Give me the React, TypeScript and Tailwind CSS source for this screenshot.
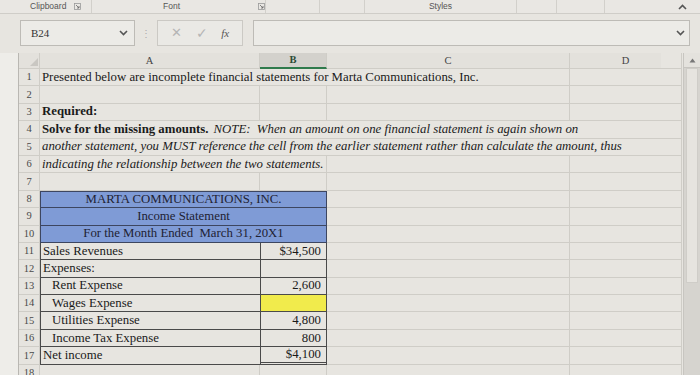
import React from "react";

const serif = "font-['Liberation_Serif','Times_New_Roman',serif]";
const sans = "font-['Liberation_Sans','Arial',sans-serif]";

const grid = "border-r border-b border-[#cfcdc7]";

function Launcher() {
    return (
        <svg width="7" height="7" viewBox="0 0 7 7" className="ml-2">
            <rect x="0.5" y="0.5" width="6" height="6" fill="none" stroke="#9a9a9a" strokeWidth="0.8" />
            <path d="M2 2 L5 5 M5 3 V5 H3" stroke="#666" strokeWidth="0.8" fill="none" />
        </svg>
    );
}

function Chevron({ up = false }: { up?: boolean }) {
    return (
        <svg width="9" height="6" viewBox="0 0 9 6">
            <path d={up ? "M1 5 L4.5 1.5 L8 5" : "M1 1 L4.5 4.5 L8 1"} stroke="#555" strokeWidth="1.6" fill="none" />
        </svg>
    );
}

function RowNum({ n }: { n: number }) {
    return (
        <div className={`w-[21px] shrink-0 flex items-center justify-center text-[10.5px] text-[#4a4a4a] ${grid} bg-[#e6e4df]`}>
            {n}
        </div>
    );
}

function Row({ n, children }: { n: number; children: React.ReactNode }) {
    return (
        <div className="flex h-[17.4px]">
            <RowNum n={n} />
            {children}
        </div>
    );
}

const wA = "w-[220px]";
const wB = "w-[67px]";
const wC = "w-[243px]";
const wD = "w-[112px]";

function Empty({ w }: { w: string }) {
    return <div className={`${w} shrink-0 ${grid}`} />;
}

function TableRow({
    n,
    label,
    value,
    indent = false,
    yellow = false,
    bottom = "",
}: {
    n: number;
    label: string;
    value?: string;
    indent?: boolean;
    yellow?: boolean;
    bottom?: string;
}) {
    return (
        <Row n={n}>
            <div
                className={`${wA} shrink-0 flex items-center border-l border-b-[1.5px] border-[#4a4a4a] ${
                    indent ? "pl-[11px]" : "pl-[2px]"
                } leading-none`}
            >
                {label}
            </div>
            <div
                className={`${wB} shrink-0 flex items-center justify-end pr-[5px] border-l-[1.5px] border-r-[1.5px] border-[#4a4a4a] ${
                    bottom || "border-b-[1.5px]"
                } ${yellow ? "bg-[#f1eb4c]" : ""} leading-none`}
            >
                {value}
            </div>
            <Empty w={wC} />
            <Empty w={wD} />
        </Row>
    );
}

export default function App() {
    return (
        <div className={`w-[700px] h-[375px] overflow-hidden bg-[#e7e5e0] text-[#1a1a1a] ${sans}`}>
            {/* ribbon group labels */}
            <div className="flex h-[14px] border-b border-[#cfcdc8] text-[8.5px] text-[#555] bg-[#e9e7e3]">
                <div className="w-[92px] flex items-center pl-[30px] border-r border-[#d2d0cb]">
                    Clipboard
                    <Launcher />
                </div>
                <div className="w-[174px] flex items-center pl-[71px] border-r border-[#d2d0cb]">
                    Font
                    <span className="ml-[70px]">
                        <Launcher />
                    </span>
                </div>
                <div className="w-[54px] border-r border-[#d2d0cb]" />
                <div className="w-[45px] border-r border-[#d2d0cb]" />
                <div className="w-[152px] flex items-center justify-center border-r border-[#d2d0cb]">Styles</div>
                <div className="w-[40px] border-r border-[#d2d0cb]" />
                <div className="w-[48px] border-r border-[#d2d0cb]" />
                <div className="flex-1 flex items-center justify-end pr-[13px]">
                    <Chevron up />
                </div>
            </div>

            {/* formula bar */}
            <div className="flex items-center h-[26px] mt-[6px] pl-[20px] pr-[10px]">
                <div className="w-[115px] h-full flex items-center justify-between px-[10px] pr-[6px] bg-[#ecebe7] border border-[#bdbbb6] text-[11px] text-[#333]">
                    <span className={serif}>B24</span>
                    <Chevron />
                </div>
                <div className="w-[22px] flex justify-center text-[#aaa] text-[10px]">⋮</div>
                <div className="w-[86px] h-full flex items-center justify-around px-[6px] bg-[#eae9e5] border border-[#cbc9c4] text-[#b5b5b5]">
                    <span className="text-[13px]">✕</span>
                    <span className="text-[14px]">✓</span>
                    <span className={`${serif} italic text-[11px] text-[#555]`}>fx</span>
                </div>
                <div className="flex-1 h-full ml-[10px] flex items-center justify-end pr-[4px] bg-[#ecebe7] border border-[#bdbbb6]">
                    <Chevron />
                </div>
            </div>

            {/* sheet */}
            <div className="flex mt-[7px]">
                <div className="w-[19px] shrink-0 border-r border-[#b9b7b2] bg-[#eeede9] h-[330px]" />
                <div className={`w-[642px] shrink-0 ${serif} text-[12.8px]`}>
                    {/* column headers */}
                    <div className="flex h-[16px] text-[10.5px] text-[#444] bg-[#e3e1dc]">
                        <div className={`w-[21px] shrink-0 ${grid} relative`}>
                            <svg width="8" height="8" viewBox="0 0 8 8" className="absolute right-[1px] bottom-[2px]">
                                <path d="M8 0 L8 8 L0 8 Z" fill="#c9c7c2" />
                            </svg>
                        </div>
                        <div className={`${wA} shrink-0 flex items-center justify-center ${grid}`}>A</div>
                        <div className={`${wB} shrink-0 flex items-center justify-center border-r border-[#cfcdc7] border-b-2 border-b-[#2f7a4c] bg-[#d3d1cc] font-bold text-[#2c4a35]`}>
                            B
                        </div>
                        <div className={`${wC} shrink-0 flex items-center justify-center ${grid}`}>C</div>
                        <div className={`${wD} shrink-0 flex items-center justify-center ${grid}`}>D</div>
                    </div>

                    <Row n={1}>
                        <div className={`w-[530px] shrink-0 flex items-center pl-[2px] whitespace-nowrap ${grid}`}>
                            Presented below are incomplete financial statements for Marta Communications, Inc.
                        </div>
                        <Empty w={wD} />
                    </Row>
                    <Row n={2}>
                        <Empty w={wA} />
                        <Empty w={wB} />
                        <Empty w={wC} />
                        <Empty w={wD} />
                    </Row>
                    <Row n={3}>
                        <div className={`${wA} shrink-0 flex items-center pl-[2px] font-bold ${grid}`}>Required:</div>
                        <Empty w={wB} />
                        <Empty w={wC} />
                        <Empty w={wD} />
                    </Row>
                    <Row n={4}>
                        <div className={`w-[642px] shrink-0 flex items-center pl-[2px] whitespace-nowrap ${grid}`}>
                            <span className="font-bold">Solve for the missing amounts.</span>
                            <span className="italic ml-[5px]">
                                NOTE:&nbsp; When an amount on one financial statement is again shown on
                            </span>
                        </div>
                    </Row>
                    <Row n={5}>
                        <div className={`w-[642px] shrink-0 flex items-center pl-[2px] whitespace-nowrap italic ${grid}`}>
                            another statement, you MUST reference the cell from the earlier statement rather than calculate the amount, thus
                        </div>
                    </Row>
                    <Row n={6}>
                        <div className={`w-[287px] shrink-0 flex items-center pl-[2px] whitespace-nowrap italic ${grid}`}>
                            indicating the relationship between the two statements.
                        </div>
                        <Empty w={wC} />
                        <Empty w={wD} />
                    </Row>
                    <Row n={7}>
                        <Empty w={wA} />
                        <Empty w={wB} />
                        <Empty w={wC} />
                        <Empty w={wD} />
                    </Row>
                    {["MARTA COMMUNICATIONS, INC.", "Income Statement", "For the Month Ended  March 31, 20X1"].map((t, i) => (
                        <Row key={t} n={8 + i}>
                            <div
                                className={`w-[287px] shrink-0 flex items-center justify-center whitespace-pre bg-[#7f9bd6] text-[#1e2233] border-l border-r-[1.5px] border-b-[1.5px] border-[#3d4660] ${
                                    i === 0 ? "border-t-[1.5px]" : ""
                                }`}
                            >
                                {t}
                            </div>
                            <Empty w={wC} />
                            <Empty w={wD} />
                        </Row>
                    ))}
                    <TableRow n={11} label="Sales Revenues" value="$34,500" />
                    <TableRow n={12} label="Expenses:" />
                    <TableRow n={13} label="Rent Expense" value="2,600" indent />
                    <TableRow n={14} label="Wages Expense" indent yellow />
                    <TableRow n={15} label="Utilities Expense" value="4,800" indent />
                    <TableRow n={16} label="Income Tax Expense" value="800" indent />
                    <TableRow n={17} label="Net income" value="$4,100" bottom="border-b-[3px] border-double" />
                    <Row n={18}>
                        <Empty w={wA} />
                        <Empty w={wB} />
                        <Empty w={wC} />
                        <Empty w={wD} />
                    </Row>
                </div>
                {/* scrollbar */}
                <div className="w-[17px] shrink-0 ml-[22px] flex flex-col border-l border-[#c7c5c0] bg-[#d6d4cf]">
                    <div className="h-[15px] flex items-center justify-center bg-[#e4e2dd] border-b border-[#c7c5c0]">
                        <svg width="7" height="5" viewBox="0 0 7 5">
                            <path d="M0.5 4.5 L3.5 0.5 L6.5 4.5 Z" fill="#777" />
                        </svg>
                    </div>
                    <div className="h-[215px] mx-[2px] bg-[#e6e4df] border border-[#cfcdc8]" />
                </div>
            </div>
        </div>
    );
}
